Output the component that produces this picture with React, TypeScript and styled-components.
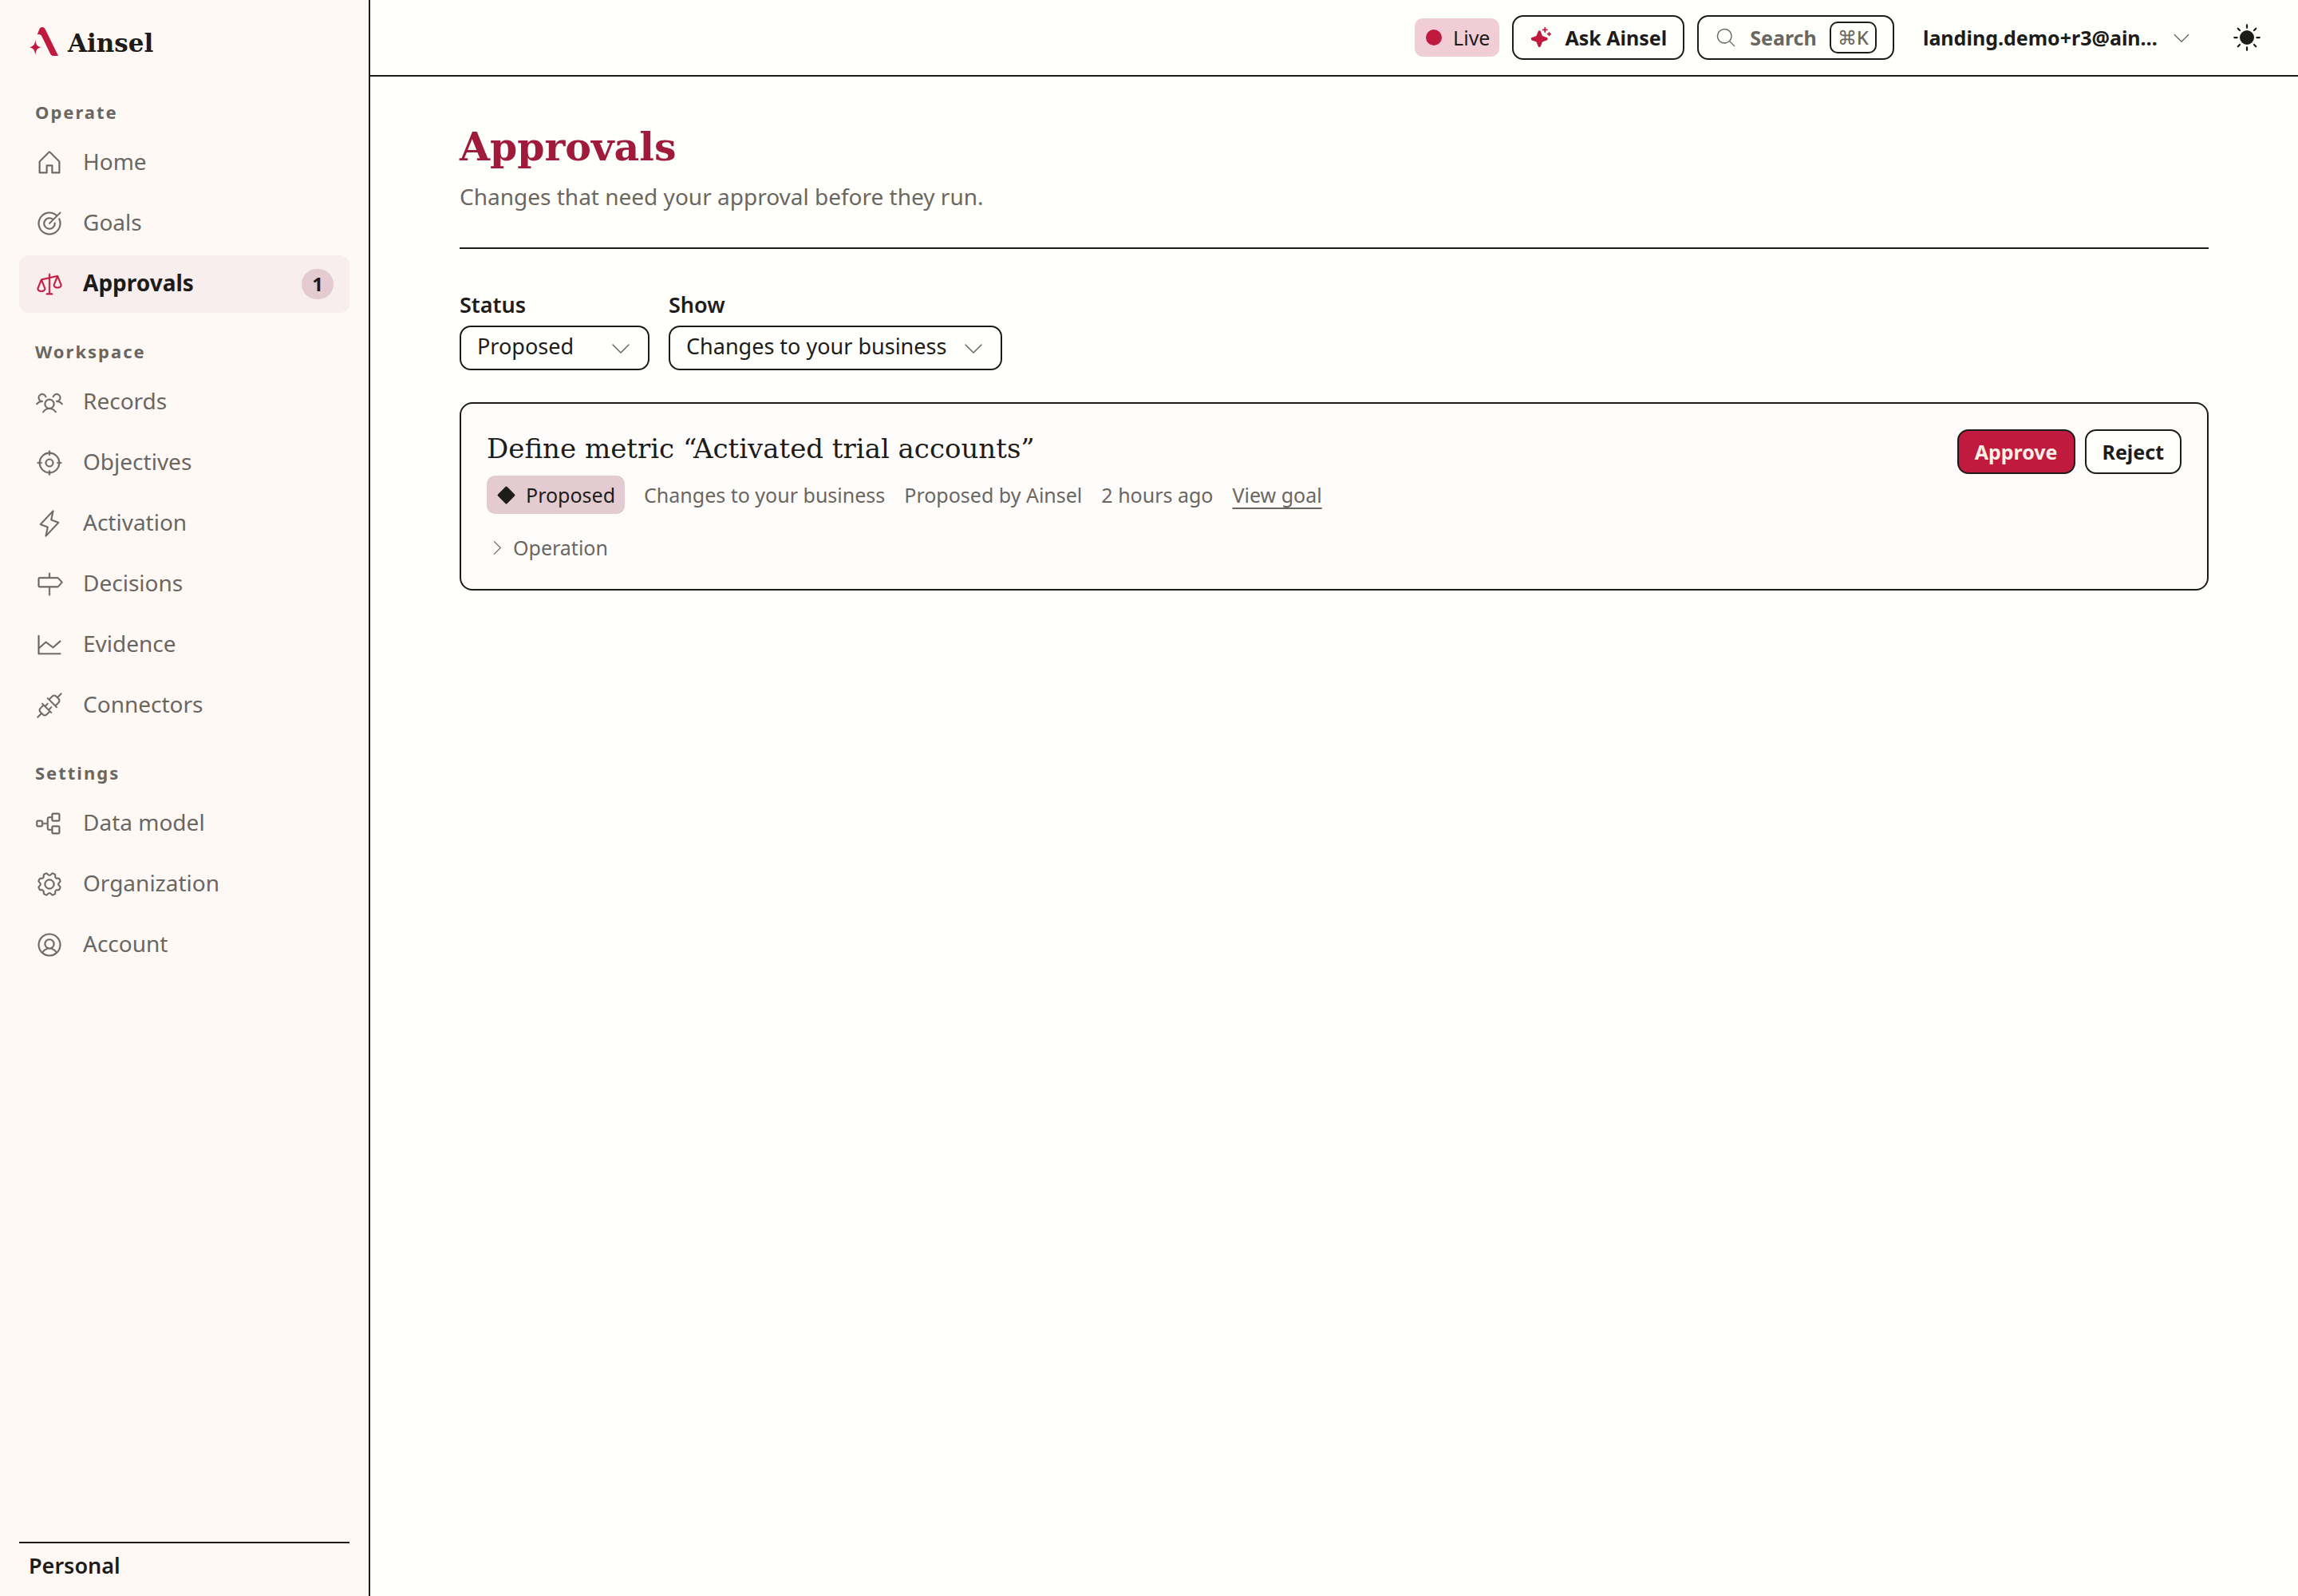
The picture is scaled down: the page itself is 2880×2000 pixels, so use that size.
import { useState } from 'react';
import type { ComponentType } from 'react';
import styled, { createGlobalStyle } from 'styled-components';
import {
  PiCaretDownLight,
  PiCaretRightLight,
  PiChartLineLight,
  PiCrosshairLight,
  PiDiamondFill,
  PiGearLight,
  PiHouseLight,
  PiLightningLight,
  PiMagnifyingGlassLight,
  PiPlugsLight,
  PiScalesLight,
  PiSignpostLight,
  PiSparkleFill,
  PiSunFill,
  PiTargetLight,
  PiTreeStructureLight,
  PiUserCircleLight,
  PiUsersThreeLight,
} from 'react-icons/pi';

type NavItem = {
  label: string;
  icon: ComponentType;
  count?: number;
};

type NavGroup = {
  title: string;
  items: NavItem[];
};

const navigation: NavGroup[] = [
  {
    title: 'Operate',
    items: [
      { label: 'Home', icon: PiHouseLight },
      { label: 'Goals', icon: PiTargetLight },
      { label: 'Approvals', icon: PiScalesLight, count: 1 },
    ],
  },
  {
    title: 'Workspace',
    items: [
      { label: 'Records', icon: PiUsersThreeLight },
      { label: 'Objectives', icon: PiCrosshairLight },
      { label: 'Activation', icon: PiLightningLight },
      { label: 'Decisions', icon: PiSignpostLight },
      { label: 'Evidence', icon: PiChartLineLight },
      { label: 'Connectors', icon: PiPlugsLight },
    ],
  },
  {
    title: 'Settings',
    items: [
      { label: 'Data model', icon: PiTreeStructureLight },
      { label: 'Organization', icon: PiGearLight },
      { label: 'Account', icon: PiUserCircleLight },
    ],
  },
];

const Logo: React.FC = () => (
  <svg width="36" height="36" viewBox="0 0 36 36" fill="currentColor" aria-hidden="true">
    <path d="M9.6 9.4 12 3.4C13 1 14.2 0 15.8 0c1.8 0 3 1 4.2 3.3L36 36h-6.4c-1.7 0-2.7-.7-3.5-2.4L15.6 11.9C14.3 9.3 12.6 8.6 9.6 9.4Z" />
    <path d="M7.3 15.8c.7 6.1 1.9 8.3 7.1 9.4-5.2 1.1-6.4 3.9-7.1 10-.7-6.1-2.1-8.9-7.3-10 5.2-1.1 6.6-3.3 7.3-9.4Z" />
  </svg>
);

const Sidebar: React.FC<{ active: string }> = ({ active }) => {
  return (
    <Aside>
      <Brand href="#">
        <Logo />
        <span>Ainsel</span>
      </Brand>
      <Nav aria-label="Main">
        {navigation.map(group => (
          <section key={group.title}>
            <GroupTitle>{group.title}</GroupTitle>
            <NavList>
              {group.items.map(({ label, icon: Icon, count }) => (
                <li key={label}>
                  <NavLink href="#" $active={label === active} aria-current={label === active ? 'page' : undefined}>
                    <Icon />
                    <NavLabel>{label}</NavLabel>
                    {count && <Count>{count}</Count>}
                  </NavLink>
                </li>
              ))}
            </NavList>
          </section>
        ))}
      </Nav>
      <Account>Personal</Account>
    </Aside>
  );
};

const TopBar: React.FC = () => {
  return (
    <Header>
      <Live>
        <Dot />
        Live
      </Live>
      <Button type="button">
        <PiSparkleFill className="accent" />
        Ask Ainsel
      </Button>
      <SearchButton type="button">
        <PiMagnifyingGlassLight />
        Search
        <kbd>⌘K</kbd>
      </SearchButton>
      <UserButton type="button">
        landing.demo+r3@ain…
        <PiCaretDownLight />
      </UserButton>
      <ThemeButton type="button" aria-label="Switch theme">
        <PiSunFill />
      </ThemeButton>
    </Header>
  );
};

const App: React.FC = () => {
  const [status, setStatus] = useState('Proposed');
  const [show, setShow] = useState('Changes to your business');

  return (
    <>
      <GlobalStyle />
      <Shell>
        <Sidebar active="Approvals" />
        <Page>
          <TopBar />
          <Main>
            <PageHead>
              <h1>Approvals</h1>
              <p>Changes that need your approval before they run.</p>
            </PageHead>
            <Filters>
              <Field $width={238}>
                <label htmlFor="status">Status</label>
                <div>
                  <select id="status" value={status} onChange={e => setStatus(e.target.value)}>
                    <option>Proposed</option>
                  </select>
                  <PiCaretDownLight />
                </div>
              </Field>
              <Field $width={418}>
                <label htmlFor="show">Show</label>
                <div>
                  <select id="show" value={show} onChange={e => setShow(e.target.value)}>
                    <option>Changes to your business</option>
                  </select>
                  <PiCaretDownLight />
                </div>
              </Field>
            </Filters>
            <Card>
              <CardBody>
                <h2>Define metric “Activated trial accounts”</h2>
                <Meta>
                  <Badge>
                    <PiDiamondFill />
                    Proposed
                  </Badge>
                  <span>Changes to your business</span>
                  <span>Proposed by Ainsel</span>
                  <span>2 hours ago</span>
                  <a href="#">View goal</a>
                </Meta>
                <Disclosure type="button" aria-expanded="false">
                  <PiCaretRightLight />
                  Operation
                </Disclosure>
              </CardBody>
              <Actions>
                <Button type="button" $primary>Approve</Button>
                <Button type="button">Reject</Button>
              </Actions>
            </Card>
          </Main>
        </Page>
      </Shell>
    </>
  );
};

export default App;

const GlobalStyle = createGlobalStyle`
  :root {
    --ink: #1d1c1a;
    --muted: #6a6661;
    --accent: #c01a3f;
    --heading: #9f1a3b;
    --paper: #fffffb;
    --sidebar: #fff9f6;
    --blush: #e4cbd2;
    --radius: 14px;
    --serif: "DejaVu Serif", "Liberation Serif", serif;
    --sans: "Noto Sans", "Open Sans", sans-serif;
  }

  * {
    box-sizing: border-box;
  }

  body {
    margin: 0;
    background: var(--paper);
    color: var(--ink);
    font: 400 27px/40px var(--sans);
  }

  button, select {
    font: inherit;
    color: inherit;
    cursor: pointer;
  }

  h1, h2, h3, p, ul {
    margin: 0;
    padding: 0;
  }

  svg {
    flex-shrink: 0;
  }
`;

const Shell = styled.div`
  display: flex;
  min-height: 100vh;
`;

const Aside = styled.aside`
  display: flex;
  flex-direction: column;
  flex: 0 0 464px;
  padding: 32px 24px 18px;
  background: var(--sidebar);
  border-right: 2px solid var(--ink);
`;

const Brand = styled.a`
  display: flex;
  align-items: center;
  gap: 12px;
  height: 40px;
  margin-bottom: 52px;
  padding-left: 13px;
  color: var(--ink);
  font: 700 31px/40px var(--serif);
  text-decoration: none;

  svg {
    color: var(--accent);
  }

  span {
    padding-top: 4px;
  }
`;

const Nav = styled.nav`
  display: flex;
  flex-direction: column;
  flex: 1;
  gap: 32px;
`;

const GroupTitle = styled.h3`
  padding: 0 20px 12px;
  color: var(--muted);
  font-size: 22px;
  line-height: 32px;
  letter-spacing: 2px;
`;

const NavList = styled.ul`
  display: flex;
  flex-direction: column;
  gap: 4px;
  list-style: none;
`;

const NavLink = styled.a<{ $active: boolean }>`
  display: flex;
  align-items: center;
  height: 72px;
  padding: 0 20px;
  border-radius: 12px;
  background: ${({ $active }) => ($active ? '#f9eeee' : 'transparent')};
  color: ${({ $active }) => ($active ? 'var(--ink)' : 'var(--muted)')};
  font-size: 28px;
  font-weight: ${({ $active }) => ($active ? 700 : 400)};
  text-decoration: none;

  svg {
    width: 36px;
    height: 36px;
    margin-right: 24px;
    color: ${({ $active }) => ($active ? 'var(--accent)' : 'inherit')};
    stroke-width: 3px;
  }
`;

const NavLabel = styled.span`
  padding-bottom: 4px;
`;

const Count = styled.span`
  min-width: 40px;
  margin-left: auto;
  border-radius: 20px;
  background: var(--blush);
  font-size: 24px;
  line-height: 38px;
  text-align: center;
`;

const Account = styled.div`
  padding: 8px 12px 0;
  border-top: 2px solid var(--ink);
  font-weight: 600;
`;

const Page = styled.div`
  flex: 1;
  min-width: 0;
`;

const Header = styled.header`
  display: flex;
  align-items: center;
  justify-content: flex-end;
  gap: 16px;
  height: 96px;
  padding-right: 36px;
  border-bottom: 2px solid var(--ink);
`;

const Live = styled.span`
  display: flex;
  align-items: center;
  gap: 14px;
  height: 48px;
  padding: 0 12px 0 14px;
  border-radius: 10px;
  background: #f1ced6;
  font-size: 25px;
`;

const Dot = styled.i`
  width: 20px;
  height: 20px;
  border-radius: 50%;
  background: var(--accent);
`;

const Button = styled.button<{ $primary?: boolean }>`
  display: flex;
  align-items: center;
  gap: 16px;
  height: 56px;
  padding: 0 20px;
  border: 2px solid var(--ink);
  border-radius: var(--radius);
  background: ${({ $primary }) => ($primary ? 'var(--accent)' : 'var(--paper)')};
  color: ${({ $primary }) => ($primary ? '#ffefe4' : 'var(--ink)')};
  font-size: 25px;
  font-weight: 700;

  svg {
    width: 28px;
    height: 28px;
  }

  .accent {
    color: var(--accent);
  }
`;

const SearchButton = styled(Button)`
  color: var(--muted);

  kbd {
    padding: 0 8px;
    border: 2px solid var(--ink);
    border-radius: 10px;
    font: 500 24px/36px var(--sans);
  }
`;

const UserButton = styled.button`
  display: flex;
  align-items: center;
  gap: 16px;
  height: 56px;
  padding: 0 24px 0 20px;
  border: 0;
  background: none;
  font-size: 25px;
  font-weight: 700;
  white-space: nowrap;

  svg {
    width: 28px;
    height: 28px;
    color: var(--muted);
  }
`;

const ThemeButton = styled.button`
  display: grid;
  place-items: center;
  width: 56px;
  height: 56px;
  padding: 0;
  border: 0;
  background: none;

  svg {
    width: 36px;
    height: 36px;
  }
`;

const Main = styled.main`
  padding: 56px 112px;
`;

const PageHead = styled.div`
  margin-bottom: 50px;
  padding-bottom: 44px;
  border-bottom: 2px solid var(--ink);

  h1 {
    color: var(--heading);
    font: 700 49px/64px var(--serif);
  }

  p {
    margin-top: 10px;
    color: var(--muted);
    font-size: 28px;
  }
`;

const Filters = styled.div`
  display: flex;
  gap: 24px;
  margin-bottom: 40px;
`;

const Field = styled.div<{ $width: number }>`
  width: ${({ $width }) => $width}px;

  label {
    display: block;
    margin-bottom: 6px;
    font-weight: 600;
  }

  div {
    display: grid;
    align-items: center;
  }

  select, svg {
    grid-area: 1 / 1;
  }

  select {
    width: 100%;
    height: 56px;
    padding: 0 52px 4px 20px;
    border: 2px solid var(--ink);
    border-radius: var(--radius);
    background: var(--paper);
    appearance: none;
  }

  svg {
    justify-self: end;
    width: 32px;
    height: 32px;
    margin-right: 20px;
    color: var(--muted);
    pointer-events: none;
  }
`;

const Card = styled.article`
  display: flex;
  align-items: flex-start;
  justify-content: space-between;
  padding: 32px;
  border: 2px solid var(--ink);
  border-radius: 16px;
  background: #fefcfb;
`;

const CardBody = styled.div`
  h2 {
    margin-bottom: 10px;
    font: 400 34px/48px var(--serif);
  }
`;

const Meta = styled.div`
  display: flex;
  align-items: center;
  gap: 24px;
  color: var(--muted);
  font-size: 25px;

  a {
    color: inherit;
    text-decoration-thickness: 2px;
    text-underline-offset: 6px;
  }
`;

const Badge = styled.span`
  display: flex;
  align-items: center;
  gap: 12px;
  height: 48px;
  padding: 0 12px;
  border-radius: 10px;
  background: var(--blush);
  color: var(--ink);
`;

const Disclosure = styled.button`
  display: flex;
  align-items: center;
  gap: 8px;
  height: 40px;
  margin-top: 22px;
  padding: 0;
  border: 0;
  background: none;
  color: var(--muted);
  font-size: 25px;
`;

const Actions = styled.div`
  display: flex;
  gap: 12px;
`;
